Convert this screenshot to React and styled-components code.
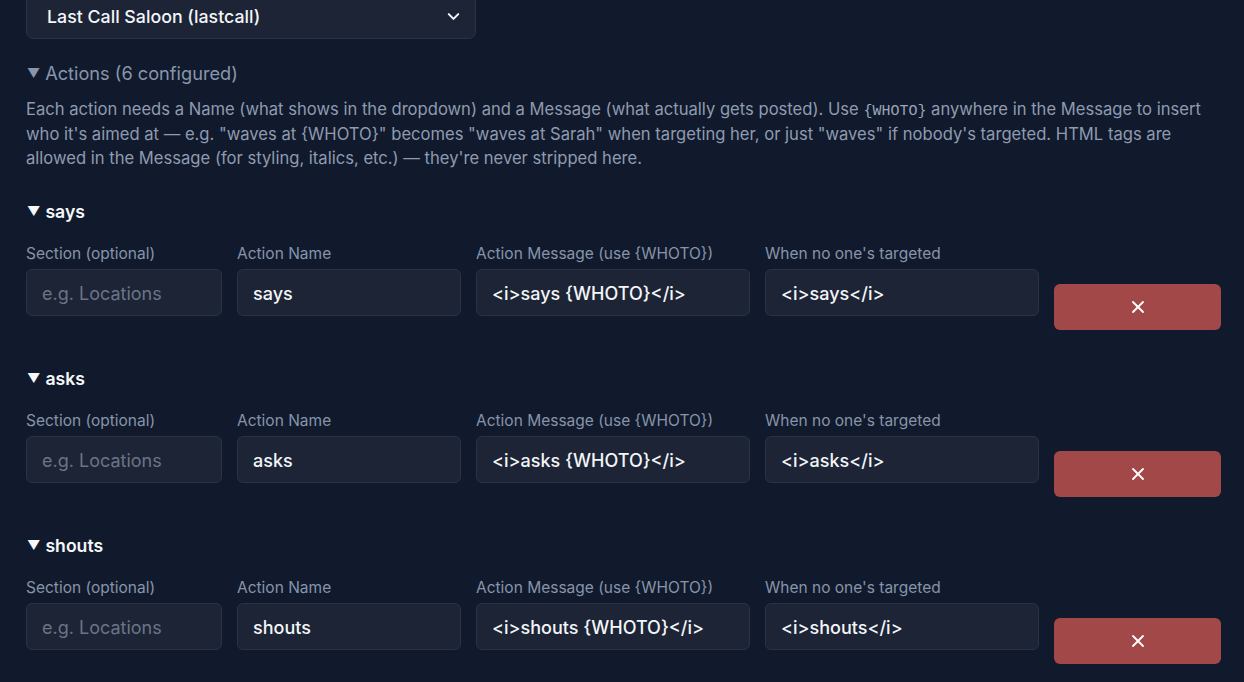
import styled, { createGlobalStyle } from 'styled-components';
import { ChevronDown, X } from 'lucide-react';

const GlobalStyle = createGlobalStyle`
  html, body {
    margin: 0;
    padding: 0;
    background: #111a2c;
    font-family: Inter, "Noto Sans", sans-serif;
    color: #e5e9f0;
  }
  * { box-sizing: border-box; }
`;

const actions = [
  { name: 'says', message: '<i>says {WHOTO}</i>', fallback: '<i>says</i>' },
  { name: 'asks', message: '<i>asks {WHOTO}</i>', fallback: '<i>asks</i>' },
  { name: 'shouts', message: '<i>shouts {WHOTO}</i>', fallback: '<i>shouts</i>' },
];

const Page = styled.div`
  margin-top: -7px;
  padding: 0 23px 40px 26px;
`;

const SelectWrap = styled.div`
  width: 450px;
  height: 46px;
  display: flex;
  align-items: center;
  justify-content: space-between;
  padding: 0 12px 0 20px;
  background: #1c2436;
  border: 1px solid #2a3345;
  border-radius: 7px;
  font-size: 17.8px;
  font-weight: 500;
  color: #f3f5f8;
`;

const Summary = styled.div`
  display: flex;
  align-items: center;
  gap: 5px;
  margin-top: 22px;
  font-size: ${p => (p.$strong ? '17.6px' : '18.2px')};
  line-height: 24px;
  color: ${p => (p.$strong ? '#f5f7fa' : '#8896ad')};
  font-weight: ${p => (p.$strong ? 600 : 400)};
`;

const Caret = styled.span`
  font-size: 13px;
  line-height: 1;
  margin-left: 1px;
`;

const Help = styled.p`
  margin: 12px 0 0;
  font-size: 16.6px;
  line-height: 24.5px;
  color: #8f9bb0;
  max-width: 1192px;

  code {
    font-family: "Liberation Mono", "DejaVu Sans Mono", monospace;
    font-size: 15px;
    line-height: 1;
    color: #9aa6ba;
  }
`;

const Group = styled.section`
  margin-top: ${p => (p.$first ? '29px' : '37px')};

  & > ${Summary} {
    margin-top: 0;
  }
`;

const Row = styled.div`
  display: grid;
  grid-template-columns: 196px 224px 1fr 1fr 167px;
  gap: 15px;
  align-items: start;
  margin-top: 20px;
`;

const Field = styled.label`
  display: flex;
  flex-direction: column;
  gap: 5px;
`;

const Label = styled.span`
  font-size: 15.5px;
  line-height: 20px;
  color: #8794aa;
  white-space: nowrap;
`;

const Input = styled.input`
  width: 100%;
  height: 47px;
  padding: 2px 15px 0;
  background: #1c2436;
  border: 1px solid #2a3345;
  border-radius: 6px;
  font-family: inherit;
  font-size: 18px;
  font-weight: 500;
  color: #f3f5f8;
  outline: none;

  &::placeholder {
    color: #6b7486;
    font-weight: 400;
  }
`;

const RemoveButton = styled.button`
  margin-top: 40px;
  height: 46px;
  display: flex;
  align-items: center;
  justify-content: center;
  background: #a34848;
  border: none;
  border-radius: 6px;
  color: #fff;
  cursor: pointer;
`;

const ActionGroup = ({ action, first }) => (
  <Group $first={first}>
    <Summary $strong>
      <Caret>▼</Caret>
      {action.name}
    </Summary>
    <Row>
      <Field>
        <Label>Section (optional)</Label>
        <Input placeholder="e.g. Locations" />
      </Field>
      <Field>
        <Label>Action Name</Label>
        <Input defaultValue={action.name} />
      </Field>
      <Field>
        <Label>Action Message (use {'{WHOTO}'})</Label>
        <Input defaultValue={action.message} />
      </Field>
      <Field>
        <Label>When no one's targeted</Label>
        <Input defaultValue={action.fallback} />
      </Field>
      <RemoveButton aria-label="Remove action">
        <X size={20} strokeWidth={2.2} />
      </RemoveButton>
    </Row>
  </Group>
);

export default function App() {
  return (
    <>
      <GlobalStyle />
      <Page>
        <SelectWrap>
          <span>Last Call Saloon (lastcall)</span>
          <ChevronDown size={19} strokeWidth={2.6} />
        </SelectWrap>
        <Summary>
          <Caret>▼</Caret>
          Actions (6 configured)
        </Summary>
        <Help>
          Each action needs a Name (what shows in the dropdown) and a Message (what actually gets
          posted). Use <code>{'{WHOTO}'}</code> anywhere in the Message to insert who it's aimed
          at — e.g. "waves at {'{WHOTO}'}" becomes "waves at Sarah" when targeting her, or just
          "waves" if nobody's targeted. HTML tags are allowed in the Message (for styling, italics,
          etc.) — they're never stripped here.
        </Help>
        {actions.map((a, i) => (
          <ActionGroup key={a.name} action={a} first={i === 0} />
        ))}
      </Page>
    </>
  );
}
